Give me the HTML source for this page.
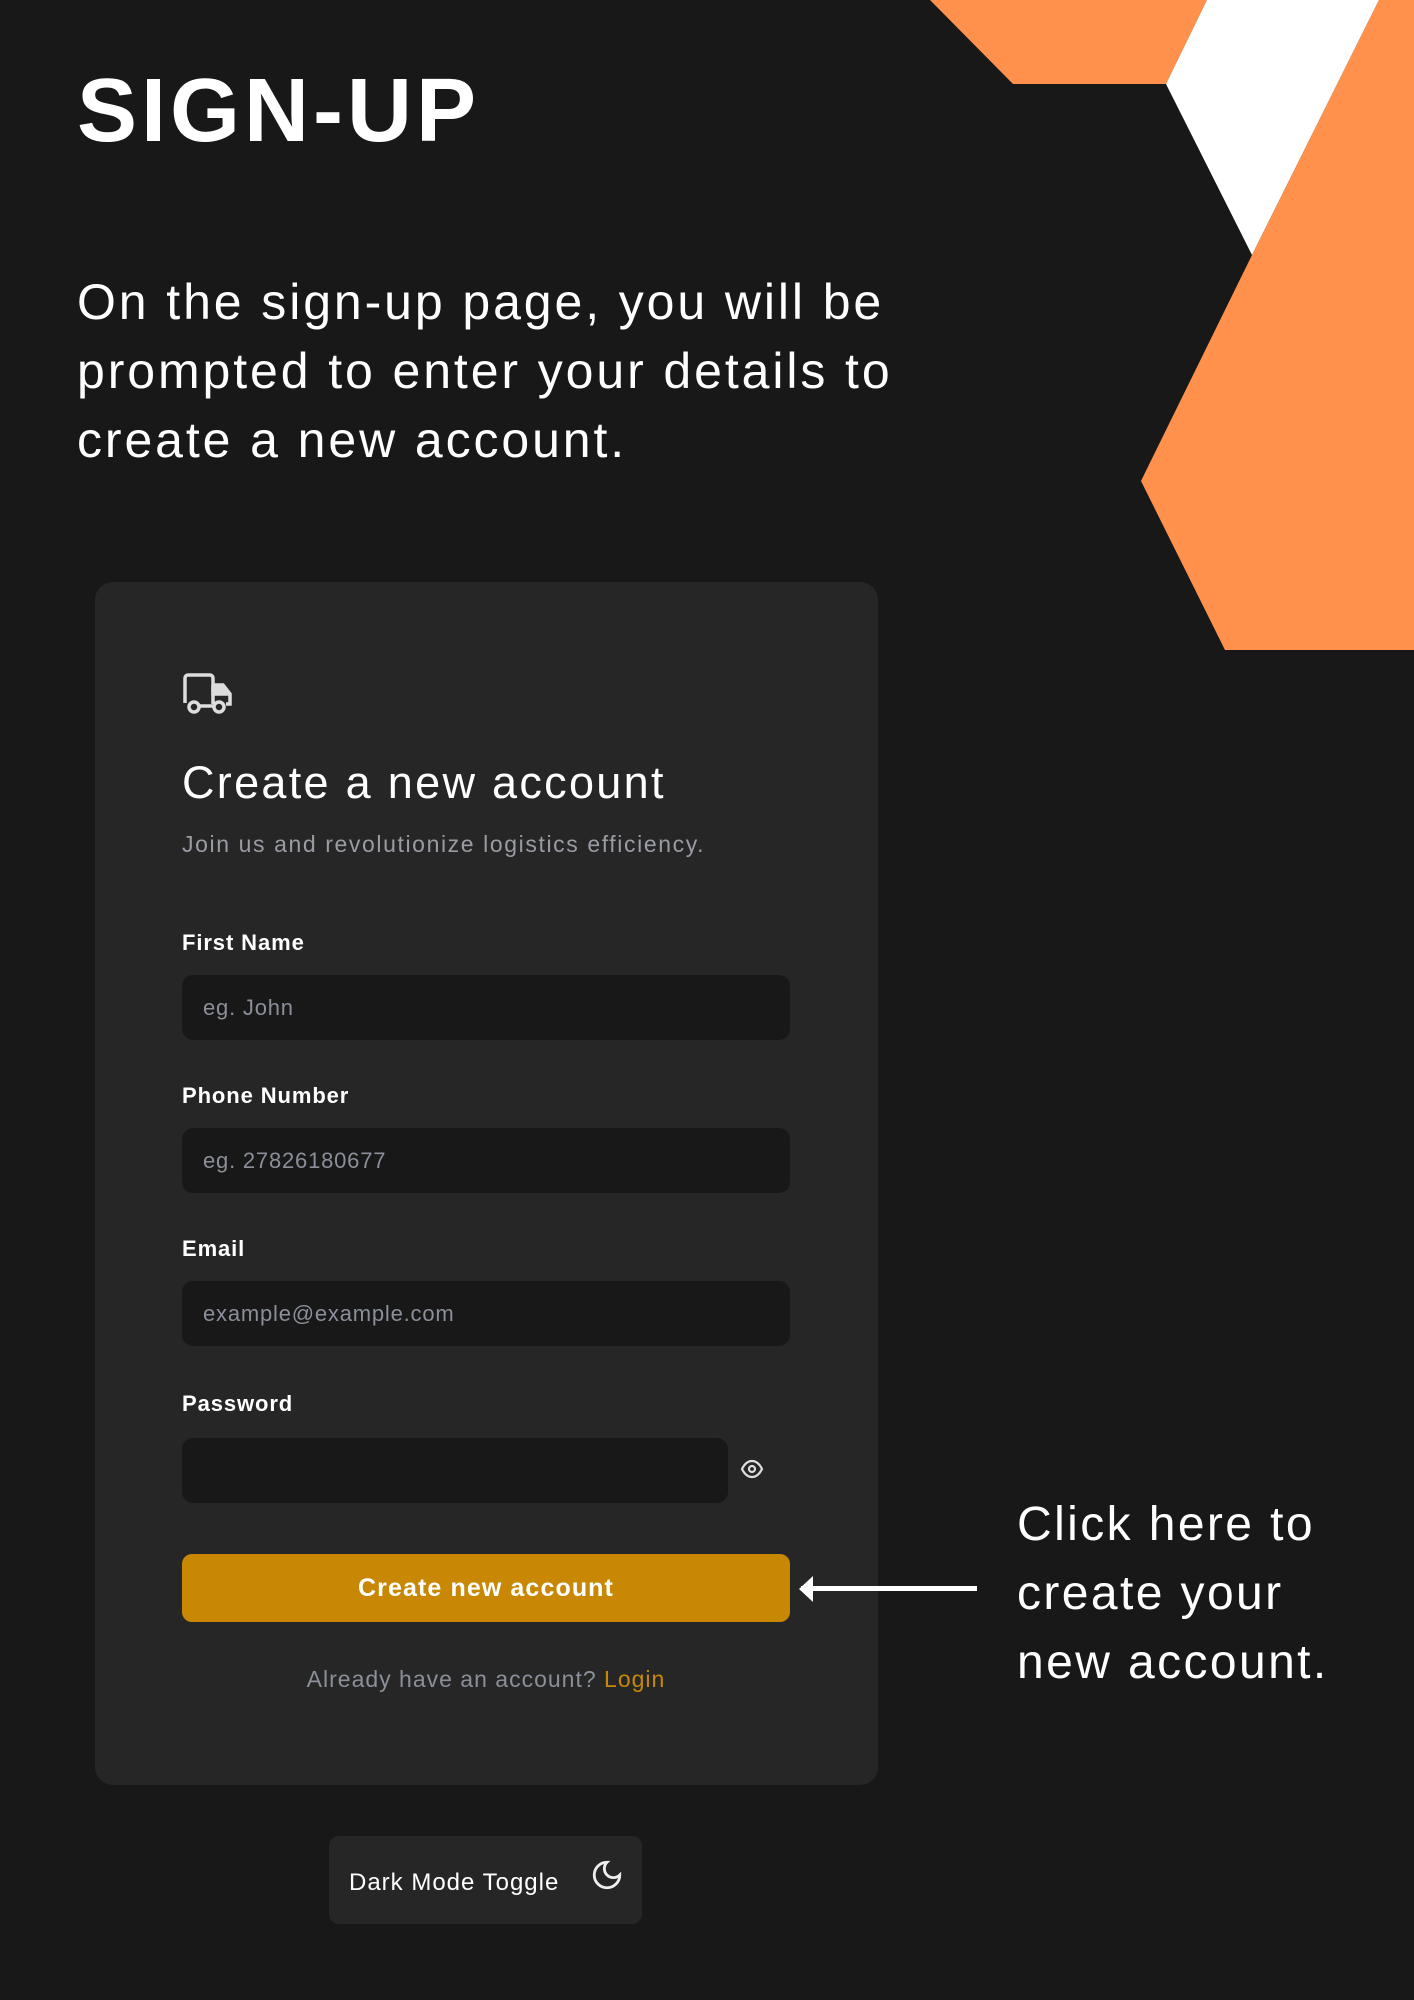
<!DOCTYPE html>
<html><head><meta charset="utf-8"><style>
*{margin:0;padding:0;box-sizing:border-box}
body{width:1414px;height:2000px;background:#181818;position:relative;overflow:hidden;font-family:"Liberation Sans",sans-serif;color:#fff}
.a{position:absolute;white-space:nowrap}
h1{position:absolute;left:77px;top:60px;font-size:90px;font-weight:bold;letter-spacing:4px}
.p{position:absolute;left:77px;top:268px;font-size:50px;line-height:69px;letter-spacing:2.9px}
.card{position:absolute;left:95px;top:582px;width:783px;height:1203px;background:#262626;border-radius:18px}
.inp{position:absolute;left:182px;width:608px;height:65px;background:#181818;border-radius:11px;color:#8b8f99;font-size:22px;padding-left:21px;line-height:65px;letter-spacing:0.8px}
.lbl{position:absolute;left:182px;font-size:22px;font-weight:bold;letter-spacing:0.9px}
</style></head><body>
<svg class="a" style="left:0;top:0" width="1414" height="2000">
<polygon points="930,0 1013,84 1166,84 1207,0" fill="#ff914d"/>
<polygon points="1207,0 1166,84 1252,255 1379,0" fill="#fff"/>
<polygon points="1379,0 1414,0 1414,650 1225,650 1141,481 1252,255" fill="#ff914d"/>
</svg>
<h1>SIGN-UP</h1>
<div class="p">On the sign-up page, you will be<br>prompted to enter your details to<br>create a new account.</div>
<div class="card"></div>
<svg class="a" style="left:182px;top:673px" width="52" height="42" viewBox="0 0 52 42" fill="none" stroke="#ddd" stroke-width="3.5">
<path d="M3 30V5a3 3 0 0 1 3-3h22a3 3 0 0 1 3 3v26"/><path d="M31 12h10l7 9v10h-4"/><path d="M31 14h9l4 7h-13z" fill="#ddd"/><circle cx="12" cy="34" r="5"/><circle cx="37" cy="34" r="5"/><path d="M17 33h15"/></svg>
<div class="a" style="left:182px;top:757px;font-size:45px;letter-spacing:2.3px">Create a new account</div>
<div class="a" style="left:182px;top:831px;font-size:23px;letter-spacing:1.6px;color:#9a9ca4">Join us and revolutionize logistics efficiency.</div>
<div class="lbl" style="top:930px">First Name</div>
<div class="inp" style="top:975px">eg. John</div>
<div class="lbl" style="top:1083px">Phone Number</div>
<div class="inp" style="top:1128px">eg. 27826180677</div>
<div class="lbl" style="top:1236px">Email</div>
<div class="inp" style="top:1281px">example@example.com</div>
<div class="lbl" style="top:1391px">Password</div>
<div class="inp" style="top:1438px;width:546px"></div>
<svg class="a" style="left:740px;top:1458px" width="24" height="22" viewBox="0 0 24 22" fill="none" stroke="#ddd" stroke-width="2.2"><path d="M2 11c3-6 7-8 10-8s7 2 10 8c-3 6-7 8-10 8s-7-2-10-8z"/><circle cx="12" cy="11" r="3"/></svg>
<div class="a" style="left:182px;top:1554px;width:608px;height:68px;background:#c98804;border-radius:10px;text-align:center;line-height:68px;font-size:25px;font-weight:bold;letter-spacing:1.1px">Create new account</div>
<div class="a" style="left:182px;width:608px;top:1666px;text-align:center;font-size:23px;letter-spacing:1px;color:#8b8f99">Already have an account? <span style="color:#c98804">Login</span></div>
<svg class="a" style="left:790px;top:1570px" width="200" height="40">
<rect x="11" y="16" width="176" height="5" fill="#fff"/>
<polygon points="9,19 23,6 23,32" fill="#fff"/>
</svg>
<div class="a" style="left:1017px;top:1490px;font-size:48px;line-height:69px;letter-spacing:2.4px">Click here to<br>create your<br>new account.</div>
<div class="a" style="left:329px;top:1836px;width:313px;height:88px;background:#262626;border-radius:10px"></div>
<div class="a" style="left:349px;top:1869px;font-size:24px;letter-spacing:1px">Dark Mode Toggle</div>
<svg class="a" style="left:590px;top:1858px" width="34" height="34" viewBox="0 0 24 24" fill="none" stroke="#eee" stroke-width="2"><path d="M12 3a6 6 0 0 0 9 9 9 9 0 1 1-9-9z"/></svg>
</body></html>
